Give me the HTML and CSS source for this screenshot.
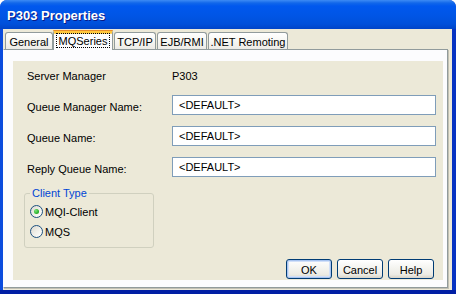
FILE: index.html
```html
<!DOCTYPE html>
<html>
<head>
<meta charset="utf-8">
<link rel="stylesheet" href="styles.css">
</head>
<body>
<div class="window">
  <div class="titlebar">P303 Properties</div>
  <div class="client">
    <div class="tabs">
      <div class="tab tab-general">General</div>
      <div class="tab tab-active tab-mq"><span class="focus">MQSeries</span></div>
      <div class="tab tab-tcp">TCP/IP</div>
      <div class="tab tab-ejb">EJB/RMI</div>
      <div class="tab tab-net">.NET Remoting</div>
    </div>
    <div class="panel">
      <div class="page">
        <div class="form">
          <div class="label">Server Manager</div>
          <div class="value">P303</div>
          <div class="label">Queue Manager Name:</div>
          <div class="field">&lt;DEFAULT&gt;</div>
          <div class="label">Queue Name:</div>
          <div class="field">&lt;DEFAULT&gt;</div>
          <div class="label">Reply Queue Name:</div>
          <div class="field">&lt;DEFAULT&gt;</div>
        </div>
        <fieldset class="group">
          <legend class="group-title">Client Type</legend>
          <div class="radio-row"><span class="radio radio-on"></span><span>MQI-Client</span></div>
          <div class="radio-row"><span class="radio"></span><span>MQS</span></div>
        </fieldset>
        <div class="buttons">
          <div class="btn btn-default">OK</div>
          <div class="btn">Cancel</div>
          <div class="btn">Help</div>
        </div>
      </div>
    </div>
  </div>
</div>
</body>
</html>
```
FILE: styles.css
```css
* { box-sizing: border-box; }
html, body {
  margin: 0;
  padding: 0;
  background: #ffffff;
}
body {
  font-family: "Liberation Sans", Arial, sans-serif;
  font-size: 11px;
  color: #000000;
}
.window {
  width: 456px;
  height: 294px;
  display: flex;
  flex-direction: column;
  background: linear-gradient(to right, #0A4BDD 0, #0843D4 50%, #0733C2 100%);
  border-radius: 7px 7px 0 0;
  border-bottom: 4px solid #001EA4;
  overflow: hidden;
}
.titlebar {
  height: 29px;
  flex: none;
  padding: 1px 0 0 7px;
  display: flex;
  align-items: center;
  color: #ffffff;
  font-weight: bold;
  font-size: 13px;
  text-shadow: 1px 1px 0 #0A1A85;
  background: linear-gradient(to bottom, #3D8BF4 0, #1167EA 3px, #0058EE 6px, #0055E5 16px, #0050DA 24px, #0044C8 29px);
}
.client {
  flex: 1;
  margin: 0 4px 0 3px;
  background: #ECE9D8;
  display: flex;
  flex-direction: column;
  padding: 1px 4px 2px 0;
}
.tabs {
  height: 19px;
  flex: none;
  display: flex;
  align-items: flex-end;
  padding-left: 2px;
  position: relative;
  z-index: 2;
}
.tab {
  height: 17px;
  border: 1px solid #919B9C;
  border-bottom: none;
  border-radius: 3px 3px 0 0;
  background: linear-gradient(to bottom, #FFFFFF 0, #F7F7F3 50%, #ECEBE6 100%);
  display: flex;
  align-items: center;
  justify-content: center;
  margin-left: 1px;
  padding-top: 1px;
}
.tab-general { width: 48px; margin-left: 0; }
.tab-mq { width: 60px; margin-left: 0; }
.tab-tcp { width: 42px; }
.tab-ejb { width: 50px; }
.tab-net { width: 80px; }
.tab-active {
  height: 20px;
  margin-bottom: -1px;
  background: #FCFCFE;
  border-top: 3px solid #FFC73C;
  box-shadow: inset 0 1px 0 #FFD66E;
  padding: 0 2px 2px;
  border-radius: 2px 2px 0 0;
  position: relative;
}
.tab-active::before {
  content: "";
  position: absolute;
  left: -1px;
  right: -1px;
  top: -3px;
  height: 1px;
  background: #E68B2C;
  border-radius: 2px 2px 0 0;
}
.focus {
  flex: 1;
  align-self: stretch;
  display: flex;
  align-items: center;
  justify-content: center;
  outline: 1px dotted #000000;
  outline-offset: -1px;
}
.panel {
  flex: 1;
  background: #FCFCFE;
  border: 1px solid #919B9C;
  border-left-color: #FCFCFE;
  box-shadow: 1px 1px 0 #C2C0B4;
  display: flex;
  flex-direction: column;
  position: relative;
  z-index: 1;
}
.page {
  flex: 1;
  margin: 11px 4px 7px 9px;
  background: #ECE9D8;
  display: flex;
  flex-direction: column;
  padding: 3px 7px 1px 11px;
}
.form {
  display: grid;
  grid-template-columns: 145px 1fr;
  grid-auto-rows: 20px;
  row-gap: 11px;
  padding-left: 3px;
  align-items: center;
}
.label, .value {
  margin-top: 4px;
  white-space: nowrap;
}
.field {
  height: 20px;
  background: #FFFFFF;
  border: 1px solid #7F9DB9;
  padding: 0 6px;
  display: flex;
  align-items: center;
}
.group {
  margin: 9px 0 0 0;
  width: 130px;
  border: 1px solid #D0D0BF;
  border-radius: 3px;
  padding: 1px 5px 6px 5px;
}
.group-title {
  color: #0046D5;
  line-height: 14px;
  padding: 0 2px;
}
.radio-row {
  height: 20px;
  display: flex;
  align-items: center;
  gap: 2px;
  padding-top: 1px;
}
.radio {
  width: 13px;
  height: 13px;
  border-radius: 50%;
  border: 1px solid #1C5180;
  background: linear-gradient(135deg, #DCD9CF 0, #F2F1EB 55%, #FFFFFF 100%);
  display: flex;
  align-items: center;
  justify-content: center;
  margin-top: -1px;
}
.radio-on::after {
  content: "";
  width: 5px;
  height: 5px;
  border-radius: 50%;
  background: radial-gradient(circle at 35% 35%, #7BE37B 0, #2DB42D 60%, #1C8F1C 100%);
}
.buttons {
  margin-top: auto;
  display: flex;
  justify-content: flex-end;
  gap: 5px;
  margin-right: 2px;
}
.btn {
  width: 46px;
  height: 20px;
  border: 1px solid #003C74;
  border-radius: 3px;
  background: linear-gradient(to bottom, #FFFFFF 0, #F5F5F1 40%, #ECEBE4 80%, #D8D4C8 100%);
  display: flex;
  align-items: center;
  justify-content: center;
  padding-top: 1px;
}
.btn-default {
  box-shadow: inset 0 0 0 1px #A8C4F0, inset 0 0 0 2px #D2E0F8;
}
```
